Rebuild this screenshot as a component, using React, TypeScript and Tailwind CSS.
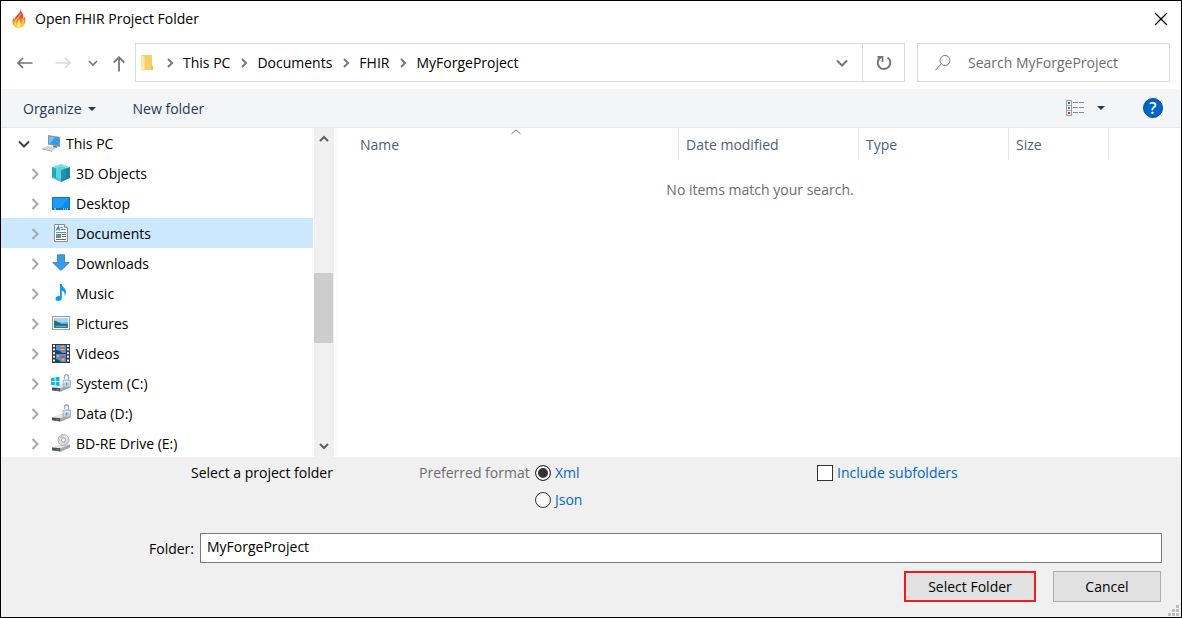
import { useState, type ReactNode } from "react";

function FlameIcon() {
  return (
    <svg viewBox="0 0 16 22" className="h-[22px] w-4 shrink-0" aria-hidden="true">
      <defs>
        <linearGradient id="flame" x1="0" y1="0" x2="0" y2="1">
          <stop offset="0" stopColor="#c9372c" />
          <stop offset="0.4" stopColor="#e2502c" />
          <stop offset="0.7" stopColor="#f7a52c" />
          <stop offset="1" stopColor="#fde23f" />
        </linearGradient>
      </defs>
      <path
        d="M9.800 1c-.2 3 2.600 4.500 2.600 7.600 0 1-.2 1.600-.5 2.200 1-.5 1.400-1.200 1.500-2 1.200 2 1.500 4.500.4 7-1.300 2.900-3.600 4.400-6.200 4.400-3 0-5.300-1.800-6-4.500C.9 13 1.700 10.800 3 9.300c0 1 .1 1.500.5 2.200C4 7.500 9.300 6 9.800 1z"
        fill="url(#flame)"
      />
      <path d="M5 17c-1.300-2.500-.7-4.200.8-6C7.300 9.300 9.200 8 9.600 5.500M10.300 17c2-2 2.200-4 1.500-6.500" fill="none" stroke="#ffe27a" strokeWidth=".9" />
      <path d="M8 19.500c-2.500-1.600-2-4.500.3-8.500.2 2.800 2.400 5.500-.3 8.500z" fill="#fff3a0" />
    </svg>
  );
}

function Chevron({ dir, color, size = 5, weight = 2 }: { dir: "right" | "down" | "up"; color: string; size?: number; weight?: number }) {
  const s = size;
  const h = s / 2;
  const d =
    dir === "right"
      ? `M${10 - h} ${10 - s}l${s} ${s}l${-s} ${s}`
      : dir === "down"
        ? `M${10 - s} ${10 - h}l${s} ${s}l${s} ${-s}`
        : `M${10 - s} ${10 + h}l${s} ${-s}l${s} ${s}`;
  return (
    <svg viewBox="0 0 20 20" className="size-5 shrink-0" aria-hidden="true">
      <path d={d} fill="none" stroke={color} strokeWidth={weight} />
    </svg>
  );
}

function Icon({ children }: { children: ReactNode }) {
  return (
    <svg viewBox="0 0 20 20" className="size-5 shrink-0" aria-hidden="true">
      {children}
    </svg>
  );
}

const PcIcon = () => (
  <Icon>
    <path d="M7 1l12 2v10L7 10.500z" fill="#8a949c" />
    <path d="M8 2.200l10 1.700v7.800L8 9.600z" fill="#2f9df0" />
    <path d="M8 2.200l6 1-5 6.600-1-.2z" fill="#6fc0fa" />
    <path d="M12 11.500l4 .8v1.700l-4-.6z" fill="#7c868e" />
    <path d="M1 14.500l5-2.500 9 2-4 3z" fill="#c3ccd3" />
    <path d="M1 14.500l10 2.500v.8L1 15.300z" fill="#8e979e" />
    <path d="M3.500 14.300l3-1.400M6.500 15l3-1.500M9 15.700l3-1.600" stroke="#eef2f5" strokeWidth=".7" />
  </Icon>
);

const CubeIcon = () => (
  <Icon>
    <path d="M10 0l9 3-9 3.500L1 3z" fill="#7be0ea" />
    <path d="M1 3l9 3.500V18L1 14z" fill="#4cc3d4" />
    <path d="M19 3l-9 3.500V18l9-4z" fill="#1484a2" />
    <path d="M1 3l4 1.500V14l-4-1.500z" fill="#22a6bd" />
    <path d="M5 4l5-2 5 2v9l-5 2-5-2z" fill="#5dd3e0" />
    <path d="M10 6.500L15 4v9.500L10 16z" fill="#1c96b0" />
  </Icon>
);

const DesktopIcon = () => (
  <Icon>
    <rect x="1" y="3" width="18" height="13" fill="#0f73c4" />
    <rect x="2" y="4" width="16" height="10" fill="#1e9bf5" />
    <path d="M18 4v10H9z" fill="#0c8bea" />
    <path d="M3 15h2M12 15h1M14 15h1M16 15h1" stroke="#fff" strokeWidth="1" />
  </Icon>
);

const DocumentIcon = () => (
  <Icon>
    <path d="M3.500.5h10l3 3v14h-13z" fill="#fff" stroke="#8b8f94" />
    <path d="M13.500.5v3h3" fill="#e5e8ea" stroke="#8b8f94" />
    <path d="M5 6.500L7.500 2.500 8.500 6.500M6 5h2.500" fill="none" stroke="#2b86cf" strokeWidth="1.200" />
    <path d="M9.500 3.500H12M9.500 5.500h5M5 8.500h10" stroke="#4a98d8" />
    <rect x="5" y="10" width="5" height="4" fill="#7b8790" />
    <path d="M11 10.500h4M11 12.500h4M5 15.500h10" stroke="#5f6970" />
  </Icon>
);

const DownloadIcon = () => (
  <Icon>
    <path d="M6.500.8h7v7.800h4.800L10 16.500 1.700 8.600h4.800z" fill="#3c9be8" stroke="#2279c5" strokeWidth=".8" />
  </Icon>
);

const MusicIcon = () => (
  <Icon>
    <path d="M9 0h1.700c.3 3 4.300 4.200 4.300 8 0 1.500-.5 2.800-1.500 4 .7-3-.4-4.800-2.700-5.500V14c0 2-1.600 3-3.400 3C5.700 17 4.500 16 4.500 14.700c0-1.600 1.500-2.700 3.300-2.700.5 0 .9 0 1.200.2z" fill="#0b9cf0" />
  </Icon>
);

const PictureIcon = () => (
  <Icon>
    <rect x="1.500" y="2.500" width="17" height="13" fill="#fff" stroke="#9a9fa3" />
    <rect x="3" y="4" width="14" height="10" fill="#5fa8e8" />
    <path d="M3 4h14v4l-6 1-8-3z" fill="#a6d2f5" />
    <path d="M3 7c3 0 5 2 7 3h7v1H3z" fill="#2e6b58" />
    <path d="M3 11h14v3H3z" fill="#2a78ad" />
    <path d="M5 12.500h10" stroke="#7dbbe0" strokeWidth=".7" />
  </Icon>
);

const VideoIcon = () => (
  <Icon>
    <rect x="1" y="0" width="18" height="19" fill="#36383b" />
    <rect x="5" y="1" width="10" height="8" fill="#4b94e8" />
    <rect x="5" y="10" width="10" height="8" fill="#4b94e8" />
    <path d="M3 1v18M17 1v18" stroke="#f2f2f2" strokeWidth="2" strokeDasharray="2 1.600" />
    <circle cx="11.500" cy="4" r="2.300" fill="#f2c21e" />
    <path d="M9.300 4h4.500" stroke="#d73b25" strokeWidth="1.300" />
    <path d="M5 9V6l4 1 2 2zM5 18v-3l3 1 2 2z" fill="#1d3f78" />
    <path d="M9.500 14.500c0-4 5-4 5 0z" fill="#e8462a" />
    <path d="M10.500 14.500h3l-.7 2h-1.500z" fill="#f2c21e" />
    <circle cx="7" cy="12" r="1" fill="#f2c21e" />
  </Icon>
);

const DriveBase = () => (
  <>
    <path d="M1 13.500L9 10.500h10v3l-8.500 4-9.500-1z" fill="#c5c9cc" />
    <path d="M1 13.500L9 10.500h10l-8.500 3.800z" fill="#e2e5e7" />
    <path d="M1 13.500l8.500.8v3.300L1 16.300z" fill="#4b4f52" />
    <path d="M9.500 14.300L19 10.500v3l-9.500 4.100z" fill="#a3a8ab" />
    <path d="M5.500 15.700h2" stroke="#48c05a" strokeWidth="1.200" />
  </>
);

const Lock = () => (
  <>
    <path d="M13.500 5V3c0-3 4-3 4 0v3" fill="none" stroke="#a3aab0" strokeWidth="1.300" />
    <path d="M12 6.500c2-.8 5.500-.8 7.500 0v6c-2 .9-5.500.9-7.500 0z" fill="#bdd3e2" stroke="#8ea2b0" strokeWidth=".7" />
    <path d="M12.500 8h6.500" stroke="#eef6fb" />
    <path d="M15.700 8.500v3" stroke="#4b93c8" strokeWidth="1.200" />
  </>
);

const SystemDriveIcon = () => (
  <Icon>
    <DriveBase />
    <path d="M0 4l3.800-.6V7H0zM4.600 3.300L8.500 2.700V7H4.600zM0 7.800h3.800v3.600L0 10.800zM4.600 7.800h3.900V12l-3.900-.5z" fill="#10b4f1" />
    <Lock />
  </Icon>
);

const DataDriveIcon = () => (
  <Icon>
    <DriveBase />
    <Lock />
  </Icon>
);

const DiscDriveIcon = () => (
  <Icon>
    <DriveBase />
    <circle cx="12.500" cy="6" r="5.600" fill="#dde0e2" stroke="#9da2a5" strokeWidth=".8" />
    <path d="M12.500 6L8.500 2.500A5.500 5.500 0 0 1 12.500.6zM12.500 6l4 3.700a5.500 5.500 0 0 1-4 1.700z" fill="#c8cdd0" />
    <circle cx="12.500" cy="6" r="2" fill="#fff" stroke="#8b9093" strokeWidth=".8" />
  </Icon>
);

const tree = [
  { label: "3D Objects", icon: <CubeIcon /> },
  { label: "Desktop", icon: <DesktopIcon /> },
  { label: "Documents", icon: <DocumentIcon /> },
  { label: "Downloads", icon: <DownloadIcon /> },
  { label: "Music", icon: <MusicIcon /> },
  { label: "Pictures", icon: <PictureIcon /> },
  { label: "Videos", icon: <VideoIcon /> },
  { label: "System (C:)", icon: <SystemDriveIcon /> },
  { label: "Data (D:)", icon: <DataDriveIcon /> },
  { label: "BD-RE Drive (E:)", icon: <DiscDriveIcon /> },
];

const crumbs = ["This PC", "Documents", "FHIR", "MyForgeProject"];

function NavBar() {
  return (
    <nav className="flex items-center gap-3 pt-1.5 pr-[11px] pb-[7px] pl-[14px]">
      <div className="flex h-[39px] shrink-0 items-center">
        <button aria-label="Back" className="w-5">
          <svg viewBox="0 0 20 20" className="size-5">
            <path d="M17.500 10H3M8 5l-5 5 5 5" fill="none" stroke="#767676" strokeWidth="1.700" />
          </svg>
        </button>
        <button aria-label="Forward" className="ml-[18px] w-5">
          <svg viewBox="0 0 20 20" className="size-5">
            <path d="M2.500 10H17M12 5l5 5-5 5" fill="none" stroke="#d9d9d9" strokeWidth="1.700" />
          </svg>
        </button>
        <button aria-label="Recent locations" className="ml-[10px] w-5">
          <Chevron dir="down" color="#767676" size={4} weight={1.7} />
        </button>
        <button aria-label="Up" className="ml-[6px] w-5">
          <svg viewBox="0 0 20 20" className="size-5">
            <path d="M10 18.500V4.500M4.800 9.500L10 4.300l5.200 5.200" fill="none" stroke="#767676" strokeWidth="1.800" />
          </svg>
        </button>
      </div>
      <div className="-ml-[6px] flex h-[39px] min-w-0 flex-1 border border-[#d9d9d9]">
        <div className="flex min-w-0 flex-1 items-center pl-1">
          <svg viewBox="0 0 14 18" className="mr-0.5 h-[18px] w-[14px] shrink-0" aria-hidden="true">
            <path d="M1 1h11v15H4z" fill="#f4cf6c" />
            <path d="M11 11l2 1v4h-2z" fill="#f0c050" />
            <path d="M1 1l3.500 2v15L1 16z" fill="#fde9a9" />
          </svg>
          {crumbs.map((c) => (
            <span key={c} className="flex items-center">
              <span className="flex w-[27px] justify-center">
                <Chevron dir="right" color="#7a7a7a" size={4} />
              </span>
              <a href="#" className="whitespace-nowrap">
                {c}
              </a>
            </span>
          ))}
          <button aria-label="Previous locations" className="mr-[10px] ml-auto">
            <Chevron dir="down" color="#767676" />
          </button>
        </div>
        <button aria-label="Refresh" className="flex w-[42px] items-center justify-center border-l border-[#d9d9d9]">
          <svg viewBox="0 0 20 20" className="size-5">
            <path d="M13.500 4.500a6.300 6.300 0 1 1-6.800-.1" fill="none" stroke="#767676" strokeWidth="2" />
            <path d="M3.500 4h5v5" fill="none" stroke="#767676" strokeWidth="1.800" />
          </svg>
        </button>
      </div>
      <label className="flex h-[39px] w-[253px] shrink-0 items-center gap-4 border border-[#d9d9d9] pl-4">
        <svg viewBox="0 0 18 18" className="size-[18px] shrink-0" aria-hidden="true">
          <circle cx="11" cy="6.500" r="5" fill="none" stroke="#767676" />
          <path d="M7.300 10L1.500 16" stroke="#767676" />
        </svg>
        <input
          type="search"
          aria-label="Search MyForgeProject"
          placeholder="Search MyForgeProject"
          className="min-w-0 flex-1 outline-none placeholder:text-[#6d6d6d]"
        />
      </label>
    </nav>
  );
}

function Toolbar() {
  return (
    <div className="flex h-[39px] shrink-0 items-center border-b border-[#e5e6e8] bg-[#f4f5f7] pr-[18px] pl-[22px] text-[#1e395b]">
      <button className="flex items-center gap-1.5 pt-0.5">
        Organize
        <svg viewBox="0 0 8 4" className="h-1 w-2" aria-hidden="true">
          <path d="M0 0h8L4 4z" fill="#1e395b" />
        </svg>
      </button>
      <button className="ml-[37px] pt-0.5">New folder</button>
      <button aria-label="Change view" className="ml-auto">
        <svg viewBox="0 0 20 18" className="h-[18px] w-5">
          <path d="M1.500 1.500h5v15h-5zM1.500 6.500h5M1.500 11.500h5" fill="#fff" stroke="#9c9c9c" />
          <path d="M3 3h2v2H3z" fill="#2c6fa8" />
          <path d="M3 8h2v2H3z" fill="#7a6a5a" />
          <path d="M3 13h2v2H3z" fill="#cc2a1e" />
          <path d="M8 3.500h5M14 3.500h5M8 8.500h5M14 8.500h5M8 13.500h5M14 13.500h5" stroke="#8d8d8d" />
        </svg>
      </button>
      <button aria-label="More view options" className="ml-3 flex h-5 items-center">
        <svg viewBox="0 0 8 4" className="h-1 w-2">
          <path d="M0 0h8L4 4z" fill="#1e395b" />
        </svg>
      </button>
      <button
        aria-label="Help"
        className="ml-[38px] flex size-5 items-center justify-center rounded-full border border-[#0a4a8c] bg-[#0066cc] text-base font-semibold text-white"
      >
        ?
      </button>
    </div>
  );
}

function FolderTree() {
  const [selected, setSelected] = useState("Documents");
  return (
    <div className="flex w-[333px] shrink-0">
      <ul className="min-w-0 flex-1 overflow-hidden">
        <li className="flex h-[30px] items-center pt-0.5 pl-[13px]">
          <button aria-label="Collapse This PC">
            <Chevron dir="down" color="#404040" />
          </button>
          <button className="ml-[7px] flex items-center gap-[5px]">
            <PcIcon />
            This PC
          </button>
        </li>
        {tree.map(({ label, icon }) => (
          <li
            key={label}
            className={
              selected === label ? "flex h-[30px] items-center bg-[#cce8ff] pt-0.5 pl-6" : "flex h-[30px] items-center pt-0.5 pl-6"
            }
          >
            <button aria-label={`Expand ${label}`}>
              <Chevron dir="right" color="#a6a6a6" />
            </button>
            <button onClick={() => setSelected(label)} className="ml-[6px] flex items-center gap-[5px]">
              {icon}
              {label}
            </button>
          </li>
        ))}
      </ul>
      <div className="ml-px flex w-5 shrink-0 flex-col bg-[#f0f0f0] py-px">
        <button aria-label="Scroll up" className="mr-px flex justify-center">
          <Chevron dir="up" color="#606060" size={4} weight={2} />
        </button>
        <div className="flex w-full flex-1 flex-col">
          <div className="flex-[124]" />
          <div className="mr-px flex-[70] bg-[#cdcdcd]" />
          <div className="flex-[93]" />
        </div>
        <button aria-label="Scroll down" className="mr-px flex justify-center">
          <Chevron dir="down" color="#606060" size={4} weight={2} />
        </button>
      </div>
    </div>
  );
}

function FileList() {
  return (
    <div className="ml-[2px] min-w-0 flex-1 border-l border-[#f5f5f5]">
      <table className="w-full table-fixed border-separate border-spacing-0">
        <thead>
          <tr className="h-8 text-left text-[#4c607a] [&>th]:p-0 [&>th]:pt-0.5 [&>th]:pl-[7px] [&>th]:font-normal">
            <td className="w-4" />
            <th className="relative w-[326px] border-r border-[#e5e5e5]">
              Name
              <svg viewBox="0 0 10 6" className="absolute top-px left-1/2 h-1.5 w-2.5 -translate-x-1/2" aria-hidden="true">
                <path d="M.5 5L5 .8 9.500 5" fill="none" stroke="#6b6b6b" />
              </svg>
            </th>
            <th className="w-[180px] border-r border-[#e5e5e5]">Date modified</th>
            <th className="w-[150px] border-r border-[#e5e5e5]">Type</th>
            <th className="w-[100px] border-r border-[#e5e5e5]">Size</th>
            <td />
          </tr>
        </thead>
        <tbody>
          <tr>
            <td colSpan={6} className="pt-5 pl-0.5 text-center text-[#6d6d6d]">
              No items match your search.
            </td>
          </tr>
        </tbody>
      </table>
    </div>
  );
}

const radioClass =
  "size-4 shrink-0 appearance-none rounded-full border border-[#333] bg-white checked:bg-[#333] checked:shadow-[inset_0_0_0_2px_#fff]";

function Footer() {
  return (
    <form onSubmit={(e) => e.preventDefault()} className="relative shrink-0 bg-[#f0f0f0] pt-1 pr-[19px] pb-[15px]">
      <div className="flex items-start pl-[190px] leading-6">
        <p className="w-[228px] shrink-0">Select a project folder</p>
        <fieldset className="flex w-[398px] shrink-0 text-[#0066cc]">
          <legend className="float-left w-[116px] text-[#6d6d6d]">Preferred format</legend>
          <div className="flex flex-col gap-[3px]">
            <label className="flex items-center gap-1">
              <input type="radio" name="format" defaultChecked className={radioClass} />
              Xml
            </label>
            <label className="flex items-center gap-1">
              <input type="radio" name="format" className={radioClass} />
              Json
            </label>
          </div>
        </fieldset>
        <label className="flex items-center gap-1 whitespace-nowrap text-[#0066cc]">
          <input type="checkbox" className="size-4 shrink-0 appearance-none border border-[#333] bg-white checked:bg-[#333]" />
          Include subfolders
        </label>
      </div>
      <div className="mt-[21px] flex items-center">
        <label htmlFor="folder" className="w-[199px] shrink-0 pt-0.5 pr-1.5 text-right">
          Folder:
        </label>
        <input
          id="folder"
          defaultValue="MyForgeProject"
          className="h-[30px] min-w-0 flex-1 border border-[#7a7a7a] bg-white px-1.5 pb-1 outline-none"
        />
      </div>
      <div className="mt-2 flex justify-end gap-[17px] pr-px">
        <button type="submit" className="h-[31px] w-[132px] border-2 border-[#ee1c1c] bg-[#e1e1e1]">
          Select Folder
        </button>
        <button type="button" className="h-[31px] w-[108px] border border-[#adadad] bg-[#e1e1e1]">
          Cancel
        </button>
      </div>
      <svg viewBox="0 0 11 11" className="absolute right-0.5 bottom-px size-[11px]" aria-hidden="true">
        <path d="M8 0h3v3H8zM4 4h3v3H4zM8 4h3v3H8zM0 8h3v3H0zM4 8h3v3H4zM8 8h3v3H8z" fill="#bfbfbf" />
      </svg>
    </form>
  );
}

export default function App() {
  return (
    <main className="flex h-screen flex-col overflow-hidden border border-black bg-white font-['Open_Sans','Noto_Sans',sans-serif] text-[14px] leading-5 text-black">
      <header className="flex h-9 shrink-0 items-center gap-2 pr-[11px] pl-[10px]">
        <FlameIcon />
        <h1>Open FHIR Project Folder</h1>
        <button aria-label="Close" className="ml-auto">
          <svg viewBox="0 0 18 18" className="size-[18px]">
            <path d="M3 3l12 12M15 3L3 15" stroke="#000" strokeWidth="1.200" />
          </svg>
        </button>
      </header>
      <NavBar />
      <Toolbar />
      <div className="flex min-h-0 flex-1">
        <FolderTree />
        <FileList />
      </div>
      <Footer />
    </main>
  );
}
